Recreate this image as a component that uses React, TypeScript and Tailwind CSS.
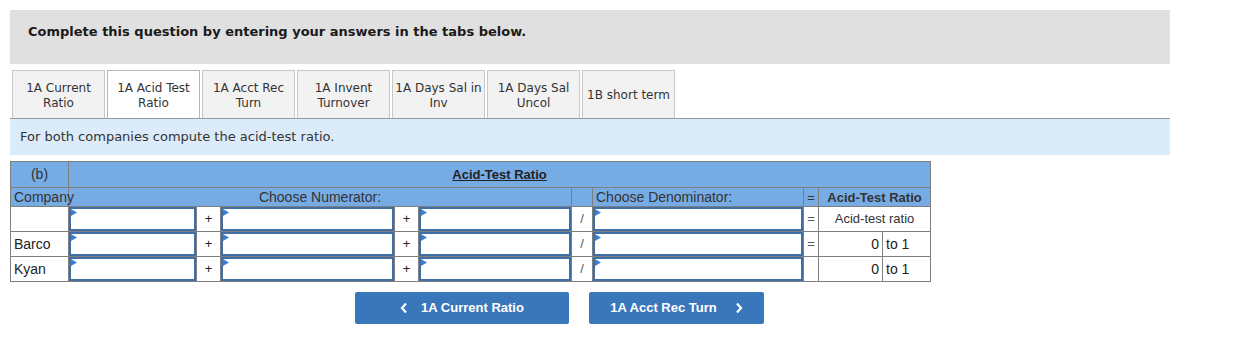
import React from "react";

const tabs: { l1: string; l2?: string; active?: boolean }[] = [
  { l1: "1A Current", l2: "Ratio" },
  { l1: "1A Acid Test", l2: "Ratio", active: true },
  { l1: "1A Acct Rec", l2: "Turn" },
  { l1: "1A Invent", l2: "Turnover" },
  { l1: "1A Days Sal in", l2: "Inv" },
  { l1: "1A Days Sal", l2: "Uncol" },
  { l1: "1B short term" },
];

function Inp() {
  return (
    <div className="relative h-[24px] w-full border-2 border-[#3f6fa6] bg-white">
      <svg className="absolute left-0 top-0" width="6" height="7" viewBox="0 0 6 7">
        <polygon points="0,0 6,3.5 0,7" fill="#3b7fd0" />
      </svg>
    </div>
  );
}

const td = "border border-[#7f7f7f] p-0";

function DataRow({ name, last }: { name: string; last?: "head" | "eq" | "none" }) {
  return (
    <tr className="h-[25px]">
      <td className={`${td} pl-[3px] text-left text-[14px]`}>{name}</td>
      <td className={td}><Inp /></td>
      <td className={`${td} text-center`}>+</td>
      <td className={td}><Inp /></td>
      <td className={`${td} text-center`}>+</td>
      <td className={td}><Inp /></td>
      <td className={`${td} text-center text-[#555]`}>/</td>
      <td className={td}><Inp /></td>
      <td className={`${td} text-center text-[#555]`}>{last === "none" ? "" : "="}</td>
      {last === "head" ? (
        <td className={`${td} text-center text-[#333]`} colSpan={2}>Acid-test ratio</td>
      ) : (
        <>
          <td className={`${td} pr-[3px] text-right text-[14px]`}>0</td>
          <td className={`${td} pl-[3px] text-left text-[14px]`}>to 1</td>
        </>
      )}
    </tr>
  );
}

export default function App() {
  return (
    <div className="h-[348px] w-[1249px] bg-white px-[10px] pt-[10px]" style={{ fontFamily: "'DejaVu Sans', Verdana, sans-serif" }}>
      <div className="h-[54px] w-[1160px] bg-[#e0e0e0] pl-[18px] pt-[14px] text-[13px] font-bold leading-[16px] text-[#1a1a1a]">
        Complete this question by entering your answers in the tabs below.
      </div>
      <div className="mt-[6px] flex h-[48px] gap-[2px] pl-[2px]">
        {tabs.map((t, i) => (
          <div
            key={i}
            className={`relative flex h-full w-[93px] flex-col items-center justify-center border border-b-0 pt-[2px] text-[12px] leading-[15px] text-[#333] ${
              t.active ? "z-10 h-[49px] border-[#b5b5b5] bg-white" : "border-[#c8c8c8] bg-[#f2f2f2]"
            }`}
          >
            <span className="whitespace-nowrap">{t.l1}</span>
            {t.l2 && <span>{t.l2}</span>}
          </div>
        ))}
      </div>
      <div className="flex h-[37px] w-[1160px] items-center border-t border-[#999] bg-[#dbebf9] pl-[10px] text-[13px] text-[#333]">
        For both companies compute the acid-test ratio.
      </div>
      <table
        className="mt-[6px] w-[920px] table-fixed border-collapse text-[13px] text-[#222]"
        style={{ fontFamily: "'Liberation Sans', Arial, sans-serif" }}
      >
        <colgroup>
          <col className="w-[58px]" />
          <col className="w-[128px]" />
          <col className="w-[24px]" />
          <col className="w-[174px]" />
          <col className="w-[24px]" />
          <col className="w-[153px]" />
          <col className="w-[21px]" />
          <col className="w-[211px]" />
          <col className="w-[15px]" />
          <col className="w-[64px]" />
          <col className="w-[48px]" />
        </colgroup>
        <tbody>
          <tr className="h-[26px] bg-[#77abe4] text-[#333]">
            <td className={`${td} text-center text-[14px]`}>(b)</td>
            <td className={`${td} text-center font-bold text-[#222] underline`} colSpan={10}>Acid-Test Ratio</td>
          </tr>
          <tr className="h-[19px] bg-[#77abe4] text-[14px] leading-[17px] text-[#333]">
            <td className={`${td} overflow-visible whitespace-nowrap pl-[3px] text-left`}>Company</td>
            <td className={`${td} text-center`} colSpan={5}>Choose Numerator:</td>
            <td className={td}></td>
            <td className={`${td} pl-[3px] text-left`}>Choose Denominator:</td>
            <td className={`${td} text-center text-[13px]`}>=</td>
            <td className={`${td} text-center text-[13px] font-bold`} colSpan={2}>Acid-Test Ratio</td>
          </tr>
          <DataRow name="" last="head" />
          <DataRow name="Barco" />
          <DataRow name="Kyan" last="none" />
        </tbody>
      </table>
      <div className="ml-[345px] mt-[10px] flex gap-[20px]" style={{ fontFamily: "'Liberation Sans', Arial, sans-serif" }}>
        <button className="flex h-[32px] w-[214px] items-center justify-center gap-[13px] rounded-[2px] bg-[#3a76ba] text-[13px] font-bold text-white">
          <svg width="8" height="12" viewBox="0 0 8 12">
            <path d="M6 1.5 L2 6 L6 10.5" stroke="white" strokeWidth="2.2" fill="none" />
          </svg>
          <span>1A Current Ratio</span>
        </button>
        <button className="flex h-[32px] w-[175px] items-center justify-center gap-[18px] rounded-[2px] bg-[#3a76ba] text-[13px] font-bold text-white">
          <span>1A Acct Rec Turn</span>
          <svg width="8" height="12" viewBox="0 0 8 12">
            <path d="M2 1.5 L6 6 L2 10.5" stroke="white" strokeWidth="2.2" fill="none" />
          </svg>
        </button>
      </div>
    </div>
  );
}
